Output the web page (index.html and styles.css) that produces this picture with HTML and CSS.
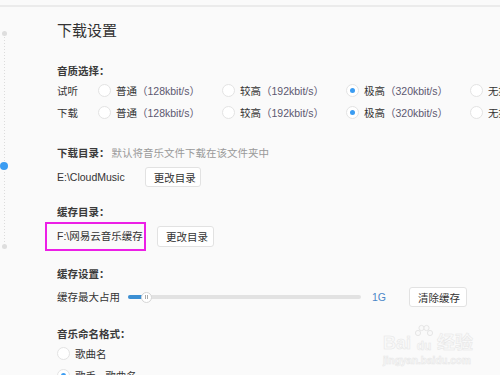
FILE: index.html
```html
<!DOCTYPE html>
<html lang="zh-CN">
<head>
    <meta charset="UTF-8">
    <meta name="viewport" content="width=device-width, initial-scale=1.0">
    <title>下载设置</title>
    <link rel="stylesheet" href="styles.css">
</head>
<body>
    <div class="topline"></div>

    <div class="page">
        <!-- 左侧导航轴 -->
        <div class="rail">
            <div class="track">
                <span class="dot"></span>
                <span class="dot active"></span>
                <span class="dot last"></span>
            </div>
        </div>

        <div class="content">
            <h1 class="title">下载设置</h1>

            <!-- 音质选择 -->
            <div class="label quality-label">音质选择：</div>
            <div class="row">
                <span class="row-name">试听</span>
                <span class="option"><i class="radio"></i>普通<span class="rate">（128kbit/s）</span></span>
                <span class="option"><i class="radio"></i>较高<span class="rate">（192kbit/s）</span></span>
                <span class="option"><i class="radio checked"></i>极高<span class="rate">（320kbit/s）</span></span>
                <span class="option"><i class="radio"></i>无损<span class="rate">（SQ）</span></span>
            </div>
            <div class="row">
                <span class="row-name">下载</span>
                <span class="option"><i class="radio"></i>普通<span class="rate">（128kbit/s）</span></span>
                <span class="option"><i class="radio"></i>较高<span class="rate">（192kbit/s）</span></span>
                <span class="option"><i class="radio checked"></i>极高<span class="rate">（320kbit/s）</span></span>
                <span class="option"><i class="radio"></i>无损<span class="rate">（SQ）</span></span>
            </div>

            <!-- 下载目录 -->
            <div class="label dir-label">下载目录：<span class="hint">默认将音乐文件下载在该文件夹中</span></div>
            <div class="line dir-line">
                <span class="path">E:\CloudMusic</span>
                <button class="btn">更改目录</button>
            </div>

            <!-- 缓存目录 -->
            <div class="label cache-label">缓存目录：</div>
            <div class="line cache-line">
                <span class="path marked">F:\网易云音乐缓存</span>
                <button class="btn">更改目录</button>
            </div>

            <!-- 缓存设置 -->
            <div class="label size-label">缓存设置：</div>
            <div class="line size-line">
                <span class="path">缓存最大占用</span>
                <div class="slider">
                    <div class="slider-fill"></div>
                    <div class="slider-thumb"><i></i><i></i></div>
                </div>
                <span class="size-value">1G</span>
                <button class="btn">清除缓存</button>
            </div>

            <!-- 音乐命名格式 -->
            <div class="label name-label">音乐命名格式：</div>
            <div class="name-row"><i class="radio"></i>歌曲名</div>
            <div class="name-row"><i class="radio checked"></i>歌手 - 歌曲名</div>
        </div>
    </div>

    <!-- 水印 -->
    <div class="watermark">
        <div class="wm-logo">Bai<span class="wm-du">
            <svg class="paw" width="22" height="16" viewBox="0 0 22 16">
                <circle cx="5" cy="9" r="2.6"/>
                <circle cx="8.5" cy="4" r="2.6"/>
                <circle cx="13.5" cy="4" r="2.6"/>
                <circle cx="17" cy="9" r="2.6"/>
            </svg>du</span>经验</div>
        <div class="wm-url">jingyan.baidu.com</div>
    </div>
</body>
</html>
```

FILE: styles.css
```css
body {
    margin: 0;
    background-color: #fafafa;
    font-family: "Liberation Sans", "Noto Sans CJK SC", sans-serif;
    font-size: 10.5px;
    color: #333;
    overflow: hidden;
    height: 375px;
}
.topline {
    margin-top: 5px;
    height: 2px;
    background-color: #ebebeb;
}
.page {
    display: flex;
}

/* 左侧轴 */
.rail {
    width: 8px;
    padding-top: 24px;
}
.track {
    display: flex;
    flex-direction: column;
    align-items: center;
    background-image: repeating-linear-gradient(to bottom, #dcdcdc 0, #dcdcdc 1px, transparent 1px, transparent 3px);
    background-size: 1px 100%;
    background-repeat: no-repeat;
    background-position: center top;
}
.dot {
    width: 5px;
    height: 5px;
    border-radius: 50%;
    background-color: #dedede;
}
.dot.active {
    width: 8px;
    height: 8px;
    margin-top: 126px;
    background-color: #3a9cf2;
}
.dot.last {
    margin-top: 74px;
}

.content {
    margin-left: 49px;
    white-space: nowrap;
}
.title {
    margin: 14px 0 0;
    font-size: 15px;
    line-height: 20px;
    font-weight: normal;
    color: #333;
}
.label {
    line-height: 16px;
    font-weight: bold;
    color: #3a3a3a;
}
.hint {
    font-weight: normal;
    color: #999;
    margin-left: 2px;
}
.quality-label { margin-top: 22px; }
.dir-label { margin-top: 22px; }
.cache-label { margin-top: 17px; }
.size-label { margin-top: 15px; }
.name-label { margin-top: 19px; }

/* 单选 */
.row {
    display: flex;
    align-items: center;
    height: 22px;
}
.row-name {
    width: 41px;
}
.option {
    display: flex;
    align-items: center;
    width: 124px;
    flex-shrink: 0;
}
.rate {
    color: #5c5870;
}
.radio {
    display: inline-flex;
    align-items: center;
    justify-content: center;
    box-sizing: border-box;
    width: 13px;
    height: 13px;
    margin-right: 5px;
    border: 1px solid #e3e3e3;
    border-radius: 50%;
    background-color: #fff;
    flex-shrink: 0;
}
.radio.checked::after {
    content: "";
    width: 5px;
    height: 5px;
    border-radius: 50%;
    background-color: #3a9cf2;
}

/* 目录行 */
.line {
    display: flex;
    align-items: center;
}
.dir-line { margin-top: 6px; }
.cache-line { margin-top: 2px; }
.size-line { margin-top: 5px; }
.path {
    line-height: 16px;
}
.btn {
    box-sizing: border-box;
    height: 20px;
    padding: 0 8px;
    border: 1px solid #e2e2e2;
    border-radius: 3px;
    background-color: #fff;
    font-family: inherit;
    font-size: 10.5px;
    color: #333;
}
.dir-line .btn {
    margin-left: 20px;
    width: 56px;
}
.path.marked {
    margin-left: -12px;
    padding: 4px 7px 5px 10px;
    border: 2px solid #ec1fe6;
    width: 80px;
}
.cache-line .btn {
    margin-left: 11px;
    width: 57px;
    height: 21px;
}

/* 缓存大小滑块 */
.size-line .path {
    width: 59px;
}
.slider {
    display: flex;
    align-items: center;
    margin-left: 12px;
    width: 233px;
    height: 4px;
    border-radius: 2px;
    background-color: #e2e2e2;
}
.slider-fill {
    width: 16px;
    height: 4px;
    border-radius: 2px;
    background-color: #3b8fd3;
}
.slider-thumb {
    display: flex;
    align-items: center;
    justify-content: center;
    gap: 1px;
    box-sizing: border-box;
    width: 11px;
    height: 11px;
    margin-left: -3px;
    border: 1px solid #d6d6d6;
    border-radius: 50%;
    background-color: #fff;
}
.slider-thumb i {
    width: 1px;
    height: 4px;
    background-color: #aaa;
}
.size-value {
    margin-left: 11px;
    width: 14px;
    color: #4a86c8;
}
.size-line .btn {
    margin-left: 23px;
    width: 58px;
}

/* 命名格式 */
.name-row {
    display: flex;
    align-items: center;
    height: 22px;
}

/* 水印 */
.watermark {
    position: absolute;
    left: 383px;
    top: 318px;
    color: #f9f9f9;
    -webkit-text-stroke: 0.5px #e6e6e6;
}
.wm-logo {
    display: flex;
    align-items: flex-end;
    font-size: 18px;
    font-weight: bold;
    line-height: 18px;
    height: 34px;
}
.wm-du {
    display: inline-flex;
    flex-direction: column;
    align-items: center;
    font-size: 12px;
    line-height: 12px;
    margin: 0 2px;
}
.paw circle {
    fill: #f9f9f9;
    stroke: #e6e6e6;
    stroke-width: 1;
}
.wm-url {
    font-size: 10px;
    font-weight: bold;
    margin-top: 3px;
}
```
